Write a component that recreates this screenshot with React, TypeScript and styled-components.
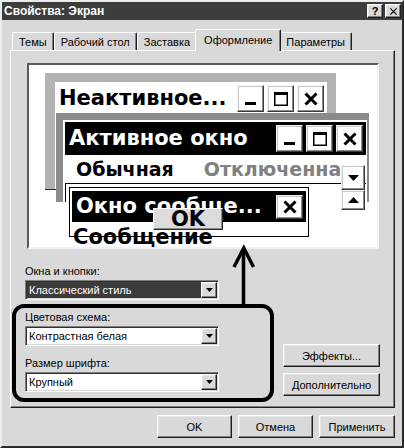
import React from 'react';
import styled, { createGlobalStyle, css } from 'styled-components';

const FACE = '#d9d9d9';
const UI_FONT = `"Liberation Sans", Arial, sans-serif`;
const PV_FONT = `"DejaVu Sans", Verdana, sans-serif`;

const GlobalStyle = createGlobalStyle`
  html, body { margin: 0; padding: 0; background: ${FACE}; }
  body { font-family: ${UI_FONT}; font-size: 11px; color: #000; }
  * { box-sizing: border-box; }
`;

const raised = css`
  border: 1px solid;
  border-color: #fff #1e1e1e #1e1e1e #fff;
  box-shadow: inset -1px -1px #808080, inset 1px 1px #e6e6e6;
`;

const Dialog = styled.div`
  width: 404px;
  height: 448px;
  background: ${FACE};
  border: 2px solid;
  border-color: #ececec #2a2a2a #2a2a2a #ececec;
  display: flex;
  flex-direction: column;
`;

const TitleBar = styled.div`
  height: 18px;
  background: #3d3d3d;
  color: #fff;
  display: flex;
  align-items: center;
  justify-content: space-between;
  padding: 0 1px 0 2px;
`;

const TitleText = styled.span`
  font-weight: bold;
  font-size: 12px;
`;

const CapButtons = styled.div`
  display: flex;
  gap: 2px;
`;

const CapButton = styled.div`
  width: 16px;
  height: 14px;
  background: ${FACE};
  ${raised};
  display: flex;
  align-items: center;
  justify-content: center;
  color: #000;
  font-weight: bold;
  font-size: 11px;
  line-height: 1;
`;

const Body = styled.div`
  flex: 1;
  display: flex;
  flex-direction: column;
  padding: 9px 7px 0 8px;
`;

const Tabs = styled.div`
  height: 21px;
  display: flex;
  align-items: flex-end;
  padding-left: 2px;
  position: relative;
  z-index: 2;
`;

const Tab = styled.div<{ $active?: boolean }>`
  height: ${(p) => (p.$active ? 22 : 18)}px;
  padding: 0 ${(p) => (p.$active ? 8 : 6)}px;
  margin: 0 ${(p) => (p.$active ? -2 : 0)}px ${(p) => (p.$active ? -1 : 0)}px;
  background: ${FACE};
  border: 1px solid;
  border-bottom: none;
  border-color: #fff #1e1e1e transparent #fff;
  border-radius: 2px 2px 0 0;
  box-shadow: inset -1px 0 #808080;
  display: flex;
  align-items: center;
  padding-bottom: ${(p) => (p.$active ? 2 : 0)}px;
  position: relative;
  z-index: ${(p) => (p.$active ? 2 : 1)};
  white-space: nowrap;
`;

const Panel = styled.div`
  height: 358px;
  position: relative;
  border: 1px solid;
  border-color: #fff #1e1e1e #1e1e1e #fff;
  box-shadow: inset -1px -1px #808080;
  padding: 12px 14px 0 16px;
`;

const Preview = styled.div`
  width: 352px;
  height: 186px;
  position: relative;
  overflow: hidden;
  background: #fff;
  border: 2px solid;
  border-color: #5a5a5a #f2f2f2 #f2f2f2 #5a5a5a;
  font-family: ${PV_FONT};
  font-weight: bold;
`;

const InactiveWin = styled.div`
  position: absolute;
  left: 16px;
  top: 8px;
  width: 291px;
  height: 117px;
  background: #b3b3b3;
  border-bottom: 1px solid #2a2a2a;
  padding: 9px 9px 0 10px;
`;

const ActiveWin = styled.div`
  position: absolute;
  left: 27px;
  top: 48px;
  width: 313px;
  height: 89px;
  background: #8a8a8a;
  padding: 7px 2px 0 7px;
`;

const WinInner = styled.div`
  height: 100%;
  background: #fff;
  display: flex;
  flex-direction: column;
`;

const ActiveInner = styled(WinInner)`
  padding: 2px 1px 0 2px;
`;

const CaptionRow = styled.div<{ $dark?: boolean; $h: number }>`
  height: ${(p) => p.$h}px;
  flex: none;
  display: flex;
  align-items: center;
  gap: 3px;
  padding: 0 3px 0 2px;
  background: ${(p) => (p.$dark ? '#000' : '#fff')};
  color: ${(p) => (p.$dark ? '#fff' : '#000')};
`;

const CaptionText = styled.span<{ $size?: number }>`
  flex: 1;
  font-size: ${(p) => p.$size ?? 21}px;
  line-height: 1.2;
  white-space: nowrap;
  padding-left: 2px;
`;

const CaptionBtn = styled.div<{ $w: number; $h: number }>`
  width: ${(p) => p.$w}px;
  height: ${(p) => p.$h}px;
  flex: none;
  background: #fff;
  border: 1px solid;
  border-color: #f4f4f4 #3a3a3a #3a3a3a #f4f4f4;
  box-shadow: inset -1px -1px #8a8a8a, inset 1px 1px #c8c8c8;
  display: flex;
  align-items: center;
  justify-content: center;
`;

const MenuBar = styled.div`
  height: 28px;
  flex: none;
  display: flex;
  align-items: center;
  gap: 30px;
  padding-left: 11px;
  font-size: 19px;
  white-space: nowrap;
  overflow: hidden;
`;

const MenuItem = styled.span<{ $disabled?: boolean }>`
  color: ${(p) => (p.$disabled ? '#808080' : '#000')};
  text-shadow: ${(p) => (p.$disabled ? '1px 1px 0 #fff' : 'none')};
`;

const WindowArea = styled.div`
  flex: 1;
  border-top: 1px solid #000;
  border-left: 1px solid #000;
  background: #fff;
`;

const ScrollBtn = styled.div<{ $top: number; $h: number }>`
  position: absolute;
  left: 285px;
  top: ${(p) => p.$top}px;
  width: 24px;
  height: ${(p) => p.$h}px;
  background: #fff;
  border: 1px solid;
  border-color: #f4f4f4 #3a3a3a #3a3a3a #f4f4f4;
  box-shadow: inset -1px -1px #8a8a8a, inset 1px 1px #c8c8c8;
  display: flex;
  align-items: center;
  justify-content: center;
`;

const MsgBox = styled.div`
  position: absolute;
  left: 40px;
  top: 122px;
  width: 240px;
  height: 50px;
  background: #fff;
  border: 1px solid #000;
  padding: 3px 2px 0 2px;
`;

const MsgText = styled.div`
  font-size: 21px;
  line-height: 21px;
  margin-top: 5px;
  padding-left: 1px;
  white-space: nowrap;
`;

const OkPreview = styled.div`
  position: absolute;
  left: 83px;
  top: 20px;
  width: 70px;
  height: 22px;
  background: #dcdcdc;
  border: 1px solid;
  border-color: #fff #2a2a2a #2a2a2a #fff;
  box-shadow: inset -1px -1px #8a8a8a;
  display: flex;
  align-items: center;
  justify-content: center;
  font-size: 21px;
  line-height: 1;
  color: #000;
`;

const Controls = styled.div`
  display: flex;
  justify-content: space-between;
  margin: 16px 0 0 -2px;
`;

const Fields = styled.div`
  width: 194px;
  display: flex;
  flex-direction: column;
  gap: 11px;
`;

const Field = styled.div`
  display: flex;
  flex-direction: column;
  gap: 2px;
`;

const Label = styled.div`
  font-size: 11px;
  line-height: 13px;
  height: 13px;
  white-space: nowrap;
`;

const Select = styled.div`
  height: 20px;
  background: #fff;
  border: 1px solid;
  border-color: #808080 #fff #fff #808080;
  box-shadow: inset 1px 1px #303030, inset -1px -1px ${FACE};
  display: flex;
  align-items: stretch;
  padding: 1px;
`;

const SelectValue = styled.div<{ $focused?: boolean }>`
  flex: 1;
  display: flex;
  align-items: center;
  padding-left: 2px;
  background: ${(p) => (p.$focused ? '#3b3b3b' : 'transparent')};
  color: ${(p) => (p.$focused ? '#fff' : '#000')};
  white-space: nowrap;
  overflow: hidden;
`;

const DropBtn = styled.div`
  width: 16px;
  flex: none;
  background: ${FACE};
  ${raised};
  display: flex;
  align-items: center;
  justify-content: center;
`;

const SideButtons = styled.div`
  display: flex;
  flex-direction: column;
  gap: 6px;
  padding-top: 79px;
`;

const Button = styled.div<{ $w: number }>`
  width: ${(p) => p.$w}px;
  height: 23px;
  background: ${FACE};
  ${raised};
  display: flex;
  align-items: center;
  justify-content: center;
  white-space: nowrap;
`;

const Footer = styled.div`
  display: flex;
  justify-content: flex-end;
  gap: 6px;
  margin-top: 7px;
`;

const Annotation = styled.svg`
  position: absolute;
  left: 0;
  top: 190px;
  pointer-events: none;
  overflow: visible;
`;

const MinIcon = () => (
  <svg width="16" height="16" viewBox="0 0 16 16">
    <rect x="2" y="11" width="11" height="3" fill="#000" />
  </svg>
);

const MaxIcon = () => (
  <svg width="18" height="16" viewBox="0 0 18 16">
    <rect x="2.75" y="1.75" width="12.5" height="12.5" fill="none" stroke="#000" strokeWidth="1.5" />
    <rect x="2" y="1" width="14" height="3" fill="#000" />
  </svg>
);

const CloseIcon = ({ size = 16, w = 3 }: { size?: number; w?: number }) => (
  <svg width={size} height={size} viewBox="0 0 16 16">
    <path d="M2.5 2.5 L13.5 13.5 M13.5 2.5 L2.5 13.5" stroke="#000" strokeWidth={w} />
  </svg>
);

const Tri = ({ up, w = 10, h = 6 }: { up?: boolean; w?: number; h?: number }) => (
  <svg width={w} height={h} viewBox={`0 0 ${w} ${h}`}>
    <path d={up ? `M0 ${h} L${w / 2} 0 L${w} ${h} Z` : `M0 0 L${w} 0 L${w / 2} ${h} Z`} fill="#000" />
  </svg>
);

const CaptionButtons = ({ h }: { h: number }) => (
  <>
    <CaptionBtn $w={27} $h={h}>
      <MinIcon />
    </CaptionBtn>
    <CaptionBtn $w={27} $h={h}>
      <MaxIcon />
    </CaptionBtn>
    <CaptionBtn $w={27} $h={h}>
      <CloseIcon />
    </CaptionBtn>
  </>
);

const tabs = ['Темы', 'Рабочий стол', 'Заставка', 'Оформление', 'Параметры'];

const fields = [
  { label: 'Окна и кнопки:', value: 'Классический стиль', focused: true },
  { label: 'Цветовая схема:', value: 'Контрастная белая' },
  { label: 'Размер шрифта:', value: 'Крупный' },
];

export default function App() {
  return (
    <>
      <GlobalStyle />
      <Dialog>
        <TitleBar>
          <TitleText>Свойства: Экран</TitleText>
          <CapButtons>
            <CapButton>?</CapButton>
            <CapButton>
              <CloseIcon size={9} w={2} />
            </CapButton>
          </CapButtons>
        </TitleBar>
        <Body>
          <Tabs>
            {tabs.map((t) => (
              <Tab key={t} $active={t === 'Оформление'}>
                {t}
              </Tab>
            ))}
          </Tabs>
          <Panel>
            <Preview>
              <InactiveWin>
                <WinInner>
                  <CaptionRow $h={33}>
                    <CaptionText>Неактивное...</CaptionText>
                    <CaptionButtons h={27} />
                  </CaptionRow>
                </WinInner>
              </InactiveWin>
              <ActiveWin>
                <ActiveInner>
                  <CaptionRow $dark $h={33}>
                    <CaptionText>Активное окно</CaptionText>
                    <CaptionButtons h={27} />
                  </CaptionRow>
                  <MenuBar>
                    <MenuItem>Обычная</MenuItem>
                    <MenuItem $disabled>Отключенная</MenuItem>
                  </MenuBar>
                  <WindowArea />
                </ActiveInner>
                <ScrollBtn $top={52} $h={25}>
                  <Tri w={11} h={6} />
                </ScrollBtn>
                <ScrollBtn $top={77} $h={20}>
                  <Tri up w={11} h={6} />
                </ScrollBtn>
              </ActiveWin>
              <MsgBox>
                <CaptionRow $dark $h={31}>
                  <CaptionText>Окно сообще...</CaptionText>
                  <CaptionBtn $w={27} $h={24}>
                    <CloseIcon />
                  </CaptionBtn>
                </CaptionRow>
                <MsgText>Сообщение</MsgText>
                <OkPreview>OK</OkPreview>
              </MsgBox>
            </Preview>
            <Controls>
              <Fields>
                {fields.map((f) => (
                  <Field key={f.label}>
                    <Label>{f.label}</Label>
                    <Select>
                      <SelectValue $focused={f.focused}>{f.value}</SelectValue>
                      <DropBtn>
                        <Tri w={7} h={4} />
                      </DropBtn>
                    </Select>
                  </Field>
                ))}
              </Fields>
              <SideButtons>
                <Button $w={97}>Эффекты...</Button>
                <Button $w={97}>Дополнительно</Button>
              </SideButtons>
            </Controls>
            <Annotation width="270" height="165" viewBox="0 0 270 165">
              <rect x="3" y="65" width="258" height="94" rx="10" ry="10" fill="none" stroke="#000" strokeWidth="4" />
              <path d="M232.5 65 L232.5 9" stroke="#000" strokeWidth="3.5" fill="none" />
              <path d="M223 26 L232.8 7 L242.5 26" stroke="#000" strokeWidth="3.5" fill="none" strokeLinejoin="miter" />
            </Annotation>
          </Panel>
          <Footer>
            <Button $w={75}>OK</Button>
            <Button $w={75}>Отмена</Button>
            <Button $w={76}>Применить</Button>
          </Footer>
        </Body>
      </Dialog>
    </>
  );
}
